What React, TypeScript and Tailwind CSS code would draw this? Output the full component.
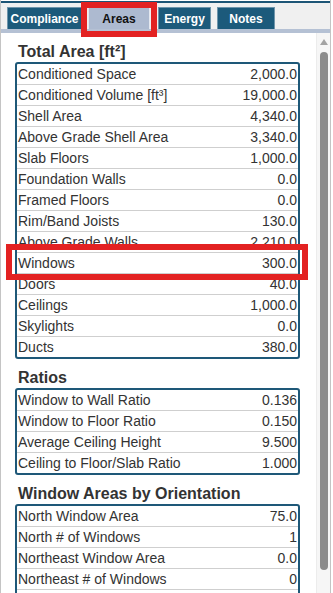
import React from 'react';

type Row = { label: string; value: string };

const totalArea: Row[] = [
    { label: 'Conditioned Space', value: '2,000.0' },
    { label: 'Conditioned Volume [ft³]', value: '19,000.0' },
    { label: 'Shell Area', value: '4,340.0' },
    { label: 'Above Grade Shell Area', value: '3,340.0' },
    { label: 'Slab Floors', value: '1,000.0' },
    { label: 'Foundation Walls', value: '0.0' },
    { label: 'Framed Floors', value: '0.0' },
    { label: 'Rim/Band Joists', value: '130.0' },
    { label: 'Above Grade Walls', value: '2,210.0' },
    { label: 'Windows', value: '300.0' },
    { label: 'Doors', value: '40.0' },
    { label: 'Ceilings', value: '1,000.0' },
    { label: 'Skylights', value: '0.0' },
    { label: 'Ducts', value: '380.0' },
];

const ratios: Row[] = [
    { label: 'Window to Wall Ratio', value: '0.136' },
    { label: 'Window to Floor Ratio', value: '0.150' },
    { label: 'Average Ceiling Height', value: '9.500' },
    { label: 'Ceiling to Floor/Slab Ratio', value: '1.000' },
];

// the rest of this table is scrolled out of view
const orientation: Row[] = [
    { label: 'North Window Area', value: '75.0' },
    { label: 'North # of Windows', value: '1' },
    { label: 'Northeast Window Area', value: '0.0' },
    { label: 'Northeast # of Windows', value: '0' },
    { label: '', value: '' },
];

const tabs = [
    { name: 'Compliance', w: 'w-[75px]', ml: 'ml-[6px]' },
    { name: 'Areas', w: 'w-[62px]', ml: 'ml-[6px]', active: true },
    { name: 'Energy', w: 'w-[53px]', ml: 'ml-[8px]' },
    { name: 'Notes', w: 'w-[58px]', ml: 'ml-[6px]' },
];

const Table = ({ rows }: { rows: Row[] }) => (
    <div className="w-[285px] border-2 border-[#1e5878] rounded-[3px] bg-white">
        {rows.map((r, i) => (
            <div
                key={i}
                className={
                    i === rows.length - 1
                        ? 'h-[20px] flex items-center justify-between pl-[1px] pr-[1px] text-[14px] leading-[20px] text-[#333]'
                        : 'h-[21px] flex items-center justify-between pl-[1px] pr-[1px] text-[14px] leading-[20px] text-[#333] border-b border-[#cfcfcf]'
                }
            >
                <span className="whitespace-nowrap">{r.label}</span>
                <span className="whitespace-nowrap">{r.value}</span>
            </div>
        ))}
    </div>
);

const Heading = ({ children, top }: { children: React.ReactNode; top?: boolean }) => (
    <div className={(top ? '' : 'mt-[9px] ') + 'h-[20px] leading-[20px] pl-[3px] text-[16px] font-bold text-[#333] whitespace-nowrap'}>
        {children}
    </div>
);

export default function App() {
    return (
        <div className="relative w-[333px] h-[593px] overflow-hidden bg-white font-['Liberation_Sans',Arial,sans-serif]">
            <div className="w-[331px] h-[593px] border-l border-r border-[#c4c4c4] flex flex-col bg-white">
                {/* Top line */}
                <div className="mt-[1px] h-[2px] bg-[#1d5576] shrink-0" />

                {/* Tab strip */}
                <div className="h-[26px] shrink-0 bg-[#f0f0f0] flex items-end">
                    {tabs.map(t => (
                        <div
                            key={t.name}
                            className={
                                t.active
                                    ? `${t.w} ${t.ml} h-[22px] flex items-center justify-center text-[12px] font-bold text-[#111] bg-[#adbad0] border-t border-l border-r border-[#e4e8ef]`
                                    : `${t.w} ${t.ml} h-[22px] flex items-center justify-center text-[12px] font-bold text-white bg-[#1c5a7b] border-t border-l border-r border-[#6f95ab]`
                            }
                        >
                            {t.name}
                        </div>
                    ))}
                </div>
                <div className="h-[4px] shrink-0 bg-[#b5c1d4]" />

                {/* Body */}
                <div className="flex flex-1 min-h-0">
                    <div className="flex-1 overflow-hidden pt-[9px] pl-[14px]">
                        <Heading top>Total Area [ft²]</Heading>
                        <Table rows={totalArea} />
                        <Heading>Ratios</Heading>
                        <Table rows={ratios} />
                        <Heading>Window Areas by Orientation</Heading>
                        <Table rows={orientation} />
                    </div>

                    {/* Scrollbar */}
                    <div className="w-[14px] shrink-0 bg-[#f6f6f6] border-l border-[#ececec] flex flex-col items-center pt-[6px]">
                        <svg width="8" height="6" viewBox="0 0 8 6" className="ml-[1px]">
                            <polygon points="4,0 8,6 0,6" fill="#a3a3a3" />
                        </svg>
                        <div className="mt-[7px] ml-[1px] w-[8px] h-[518px] rounded-full bg-[#8c8c8c]" />
                    </div>
                </div>
            </div>

            {/* Annotation boxes */}
            <div className="absolute left-[81px] top-[2px] w-[76px] h-[35px] border-[6px] border-[#e32222]" />
            <div className="absolute left-[6px] top-[244px] w-[302px] h-[36px] border-[6px] border-[#e32222]" />
        </div>
    );
}
